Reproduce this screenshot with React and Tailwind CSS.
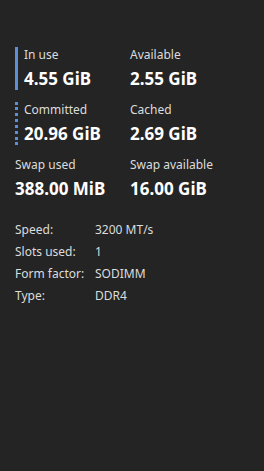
import React from "react";

const stats = [
  { label: "In use", value: "4.55 GiB", bar: "solid", label2: "Available", value2: "2.55 GiB" },
  { label: "Committed", value: "20.96 GiB", bar: "dotted", label2: "Cached", value2: "2.69 GiB" },
  { label: "Swap used", value: "388.00 MiB", bar: null, label2: "Swap available", value2: "16.00 GiB" },
];

const info = [
  ["Speed:", "3200 MT/s"],
  ["Slots used:", "1"],
  ["Form factor:", "SODIMM"],
  ["Type:", "DDR4"],
];

function Stat({ label, value, bar }) {
  return (
    <div className="flex gap-[6px]">
      {bar === "solid" && <div className="w-[3px] bg-[#5b8fd8]" />}
      {bar === "dotted" && <div className="border-l-[3px] border-dotted border-[#5b8fd8]" />}
      <div className="flex flex-col">
        <span className="text-[12px] leading-[16px] text-[#dcdcdc]">{label}</span>
        <span className="mt-[5px] text-[17px] leading-[22px] font-bold text-white">{value}</span>
      </div>
    </div>
  );
}

export default function App() {
  return (
    <div
      className="w-[264px] h-[471px] bg-[#242424] px-[15px] pt-[47px]"
      style={{ fontFamily: '"Noto Sans", sans-serif' }}
    >
      <div className="flex flex-col gap-[12px]">
        {stats.map((s) => (
          <div key={s.label} className="grid grid-cols-[115px_1fr]">
            <Stat label={s.label} value={s.value} bar={s.bar} />
            <Stat label={s.label2} value={s.value2} bar={null} />
          </div>
        ))}
      </div>
      <div className="mt-[19px] flex flex-col">
        {info.map(([k, v]) => (
          <div key={k} className="flex text-[12px] leading-[22px] text-[#dcdcdc]">
            <span className="w-[80px]">{k}</span>
            <span>{v}</span>
          </div>
        ))}
      </div>
    </div>
  );
}
